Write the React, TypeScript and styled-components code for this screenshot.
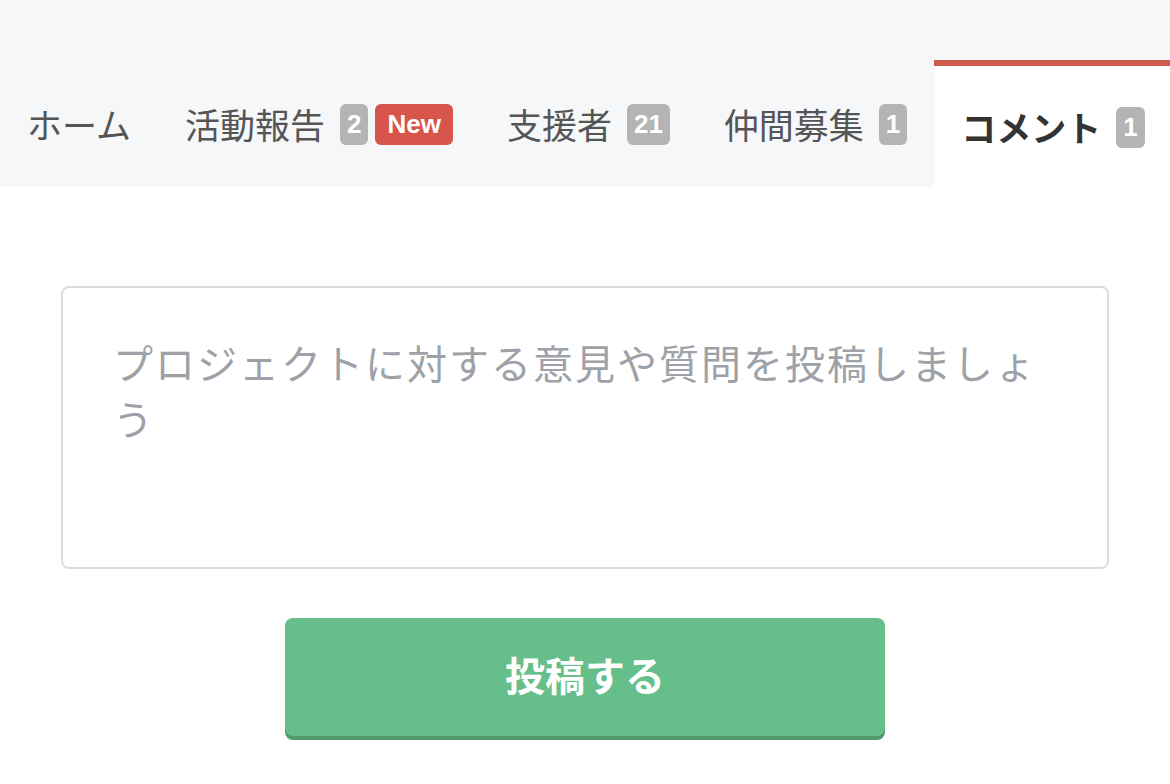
import React from 'react';
import styled, { createGlobalStyle } from 'styled-components';

const GlobalStyle = createGlobalStyle`
  body {
    margin: 0;
    background: #ffffff;
    font-family: "Noto Sans CJK JP", "Liberation Sans", sans-serif;
  }
`;

const Page = styled.div`
  width: 1170px;
  min-height: 784px;
  background: #ffffff;
`;

const TabBar = styled.nav`
  display: flex;
  align-items: flex-end;
  height: 187px;
  padding-top: 60px;
  box-sizing: border-box;
  background: #f6f7f9;
`;

const Tab = styled.div<{ $active?: boolean }>`
  display: flex;
  align-items: center;
  height: 127px;
  padding: 0 27px;
  box-sizing: border-box;
  font-size: 35px;
  color: ${p => (p.$active ? '#333333' : '#555555')};
  font-weight: ${p => (p.$active ? 700 : 400)};
  background: ${p => (p.$active ? '#ffffff' : 'transparent')};
  border-top: ${p => (p.$active ? '6px solid #cf5a50' : 'none')};
  flex: ${p => (p.$active ? '1' : 'none')};
  white-space: nowrap;
`;

const Badges = styled.span`
  display: flex;
  gap: 7px;
  margin-left: 15px;
  padding-top: 2px;
`;

const Badge = styled.span<{ $tone?: 'count' | 'new' }>`
  display: inline-flex;
  align-items: center;
  justify-content: center;
  height: 41px;
  padding: 0 ${p => (p.$tone === 'new' ? '12px' : '7px')};
  border-radius: 6px;
  background: ${p => (p.$tone === 'new' ? '#d7554b' : '#b4b4b4')};
  color: #ffffff;
  font-family: "Liberation Sans", "Noto Sans CJK JP", sans-serif;
  font-weight: 700;
  font-size: 26px;
`;

const Body = styled.section`
  display: flex;
  flex-direction: column;
  align-items: center;
  padding: 99px 61px 40px;
  gap: 49px;
`;

const CommentBox = styled.textarea`
  display: block;
  width: 100%;
  height: 283px;
  box-sizing: border-box;
  padding: 46px 50px;
  border: 2px solid #dadcdf;
  border-radius: 8px;
  resize: none;
  outline: none;
  font-family: "Noto Sans CJK JP", sans-serif;
  font-size: 40px;
  letter-spacing: 2px;
  line-height: 56px;
  color: #333333;

  &::placeholder {
    color: #9ea2a8;
  }
`;

const SubmitButton = styled.button`
  width: 600px;
  height: 118px;
  border: none;
  border-radius: 8px;
  background: #66bf8b;
  box-shadow: 0 4px 0 #4f9b6d;
  color: #ffffff;
  font-family: "Noto Sans CJK JP", sans-serif;
  font-weight: 700;
  font-size: 40px;
  padding-bottom: 8px;
  cursor: pointer;
`;

type BadgeData = { text: string; tone: 'count' | 'new' };

const tabs: { label: string; badges: BadgeData[]; active?: boolean }[] = [
  { label: 'ホーム', badges: [] },
  { label: '活動報告', badges: [{ text: '2', tone: 'count' }, { text: 'New', tone: 'new' }] },
  { label: '支援者', badges: [{ text: '21', tone: 'count' }] },
  { label: '仲間募集', badges: [{ text: '1', tone: 'count' }] },
  { label: 'コメント', badges: [{ text: '1', tone: 'count' }], active: true },
];

const App = () => {
  return (
    <Page>
      <GlobalStyle />
      <TabBar>
        {tabs.map(t => (
          <Tab key={t.label} $active={t.active}>
            {t.label}
            {t.badges.length > 0 && (
              <Badges>
                {t.badges.map(b => (
                  <Badge key={b.text} $tone={b.tone}>{b.text}</Badge>
                ))}
              </Badges>
            )}
          </Tab>
        ))}
      </TabBar>
      <Body>
        <CommentBox placeholder="プロジェクトに対する意見や質問を投稿しましょう" />
        <SubmitButton>投稿する</SubmitButton>
      </Body>
    </Page>
  );
};

export default App;
